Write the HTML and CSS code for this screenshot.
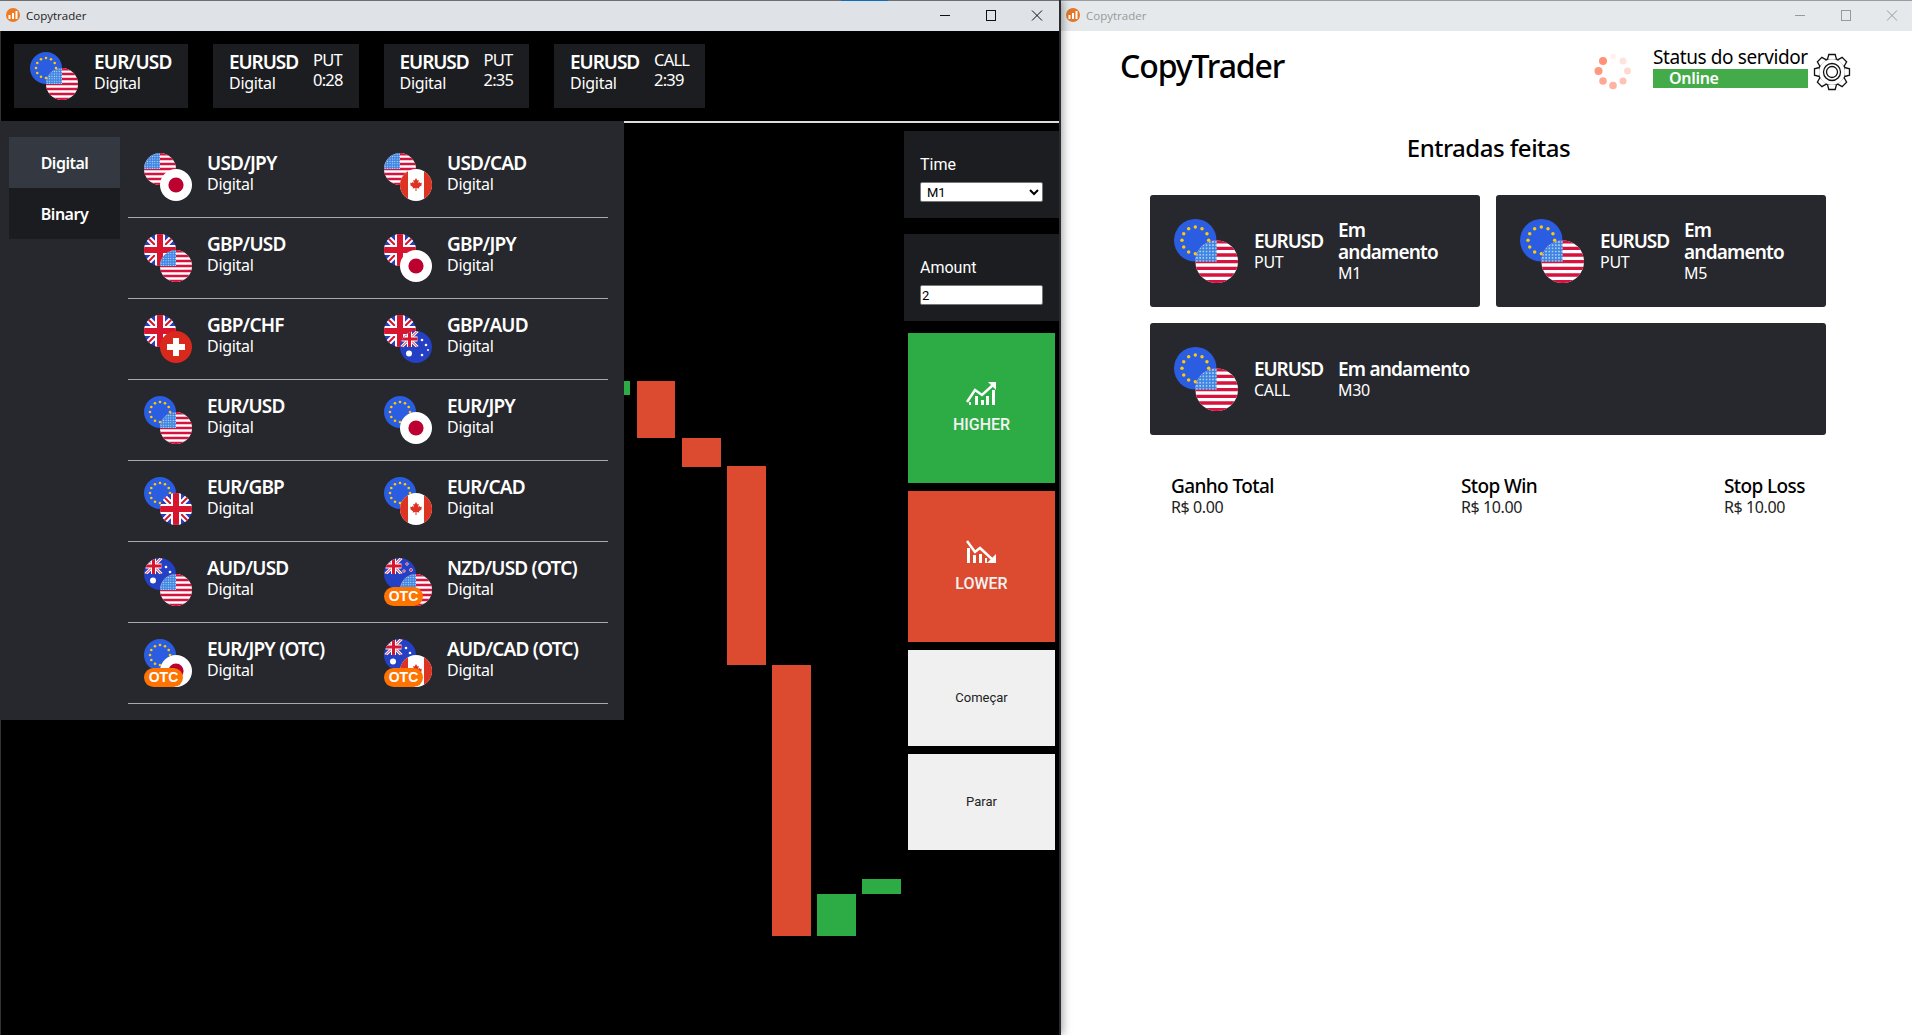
FILE: index.html
```html
<!DOCTYPE html>
<html>
<head>
    <title>Copytrader</title>
    <link rel="stylesheet" href="styles.css">
</head>
<body>
    <svg class="defs" width="0" height="0">
        <defs>
            <clipPath id="disc"><circle cx="16" cy="16" r="16"/></clipPath>
            <pattern id="stars" width="2.4" height="2.4" patternUnits="userSpaceOnUse">
                <rect width="2.4" height="2.4" fill="#3f86e2"/>
                <circle cx="1.2" cy="1.2" r=".6" fill="#cfe2fa"/>
            </pattern>
            <symbol id="jack" viewBox="0 0 32 32">
                <rect width="32" height="32" fill="#2b3fbd"/>
                <path d="M0 0L32 32M32 0L0 32" stroke="#fff" stroke-width="6"/>
                <path d="M0 0L32 32M32 0L0 32" stroke="#d8152f" stroke-width="2"/>
                <path d="M16 0V32M0 16H32" stroke="#fff" stroke-width="10"/>
                <path d="M16 0V32M0 16H32" stroke="#d8152f" stroke-width="6"/>
            </symbol>
            <symbol id="gb" viewBox="0 0 32 32">
                <g clip-path="url(#disc)"><use href="#jack" width="32" height="32"/></g>
            </symbol>
            <symbol id="us" viewBox="0 0 32 32">
                <g clip-path="url(#disc)">
                    <rect width="32" height="32" fill="#fff"/>
                    <path d="M0 1.2H32M0 6H32M0 11H32M0 16H32M0 21H32M0 26H32M0 31H32" stroke="#d8123f" stroke-width="2.5"/>
                    <rect width="16" height="16" fill="url(#stars)"/>
                </g>
            </symbol>
            <symbol id="eu" viewBox="0 0 32 32">
                <g clip-path="url(#disc)">
                    <rect width="32" height="32" fill="#2a5de2"/>
                    <g fill="#ffcb05">
                        <circle cx="26" cy="16" r="1.3"/><circle cx="24.7" cy="21" r="1.3"/><circle cx="21" cy="24.7" r="1.3"/>
                        <circle cx="16" cy="26" r="1.3"/><circle cx="11" cy="24.7" r="1.3"/><circle cx="7.3" cy="21" r="1.3"/>
                        <circle cx="6" cy="16" r="1.3"/><circle cx="7.3" cy="11" r="1.3"/><circle cx="11" cy="7.3" r="1.3"/>
                        <circle cx="16" cy="6" r="1.3"/><circle cx="21" cy="7.3" r="1.3"/><circle cx="24.7" cy="11" r="1.3"/>
                    </g>
                </g>
            </symbol>
            <symbol id="jp" viewBox="0 0 32 32">
                <g clip-path="url(#disc)">
                    <rect width="32" height="32" fill="#fff"/>
                    <circle cx="16" cy="16" r="7.6" fill="#bc0030"/>
                </g>
            </symbol>
            <symbol id="ca" viewBox="0 0 32 32">
                <g clip-path="url(#disc)">
                    <rect width="32" height="32" fill="#fff"/>
                    <path d="M0 0H8V32H0ZM24 0H32V32H24Z" fill="#dc3322"/>
                    <path d="M16 9l1.400 2.500 1.400-.7-.6 3.500 1.600-1.400.4 1.100 1.700-.3-.6 1.800.7.400-3 2.400.3 1.100-2.800-.3V22h-1v-2.900l-2.800.3.300-1.100-3-2.400.7-.4-.6-1.800 1.700.3.400-1.100 1.600 1.400-.6-3.500 1.400.7z" fill="#dc3322"/>
                </g>
            </symbol>
            <symbol id="ch" viewBox="0 0 32 32">
                <g clip-path="url(#disc)">
                    <rect width="32" height="32" fill="#d9291c"/>
                    <path d="M13 7H19V13H25V19H19V25H13V19H7V13H13Z" fill="#fff"/>
                </g>
            </symbol>
            <symbol id="au" viewBox="0 0 32 32">
                <g clip-path="url(#disc)">
                    <rect width="32" height="32" fill="#2440c4"/>
                    <use href="#jack" width="19" height="16"/>
                    <g fill="#fff">
                        <circle cx="9" cy="22.500" r="3"/>
                        <circle cx="22" cy="24" r="1.300"/><circle cx="26" cy="14" r="1.300"/>
                        <circle cx="22" cy="9" r="1.300"/><circle cx="28" cy="19" r="1"/>
                    </g>
                </g>
            </symbol>
            <symbol id="nz" viewBox="0 0 32 32">
                <g clip-path="url(#disc)">
                    <rect width="32" height="32" fill="#2440c4"/>
                    <use href="#jack" width="19" height="16"/>
                    <g fill="#d8152f" stroke="#fff" stroke-width=".6">
                        <circle cx="23" cy="6" r="1.300"/><circle cx="27" cy="12" r="1.500"/>
                        <circle cx="20" cy="13" r="1.300"/><circle cx="23" cy="22" r="1.500"/>
                    </g>
                </g>
            </symbol>
        </defs>
    </svg>

    <div class="focus-strip"></div>

    <div class="window window-left">
        <div class="titlebar">
            <svg class="app-logo" width="14" height="14" viewBox="0 0 14 14"><circle cx="7" cy="7" r="7" fill="#ee7a22"/><path d="M3.500 7V11M7 5V11M10.500 3V11" stroke="#fff" stroke-width="2"/></svg>
            <span class="app-name">Copytrader</span>
            <div class="win-buttons">
                <svg width="46" height="31" viewBox="0 0 46 31"><path d="M18 15.500H28" stroke="#111"/></svg>
                <svg width="46" height="31" viewBox="0 0 46 31"><rect x="18.500" y="10.500" width="9" height="10" fill="none" stroke="#111"/></svg>
                <svg width="46" height="31" viewBox="0 0 46 31"><path d="M18 10.500L28 20.500M28 10.500L18 20.500" stroke="#111"/></svg>
            </div>
        </div>
        <div class="window-body">
            <div class="top-cards">
                <div class="top-card">
                    <svg class="pair" width="48" height="48"><use href="#eu" width="32" height="32"/><use href="#us" x="16" y="16" width="32" height="32"/></svg>
                    <div class="pair-text main-col"><div class="pair-name">EUR/USD</div><div class="pair-sub">Digital</div></div>
                </div>
                <div class="top-card">
                    <div class="pair-text name-col"><div class="pair-name">EURUSD</div><div class="pair-sub">Digital</div></div>
                    <div class="thin"><div>PUT</div><div>0:28</div></div>
                </div>
                <div class="top-card">
                    <div class="pair-text name-col"><div class="pair-name">EURUSD</div><div class="pair-sub">Digital</div></div>
                    <div class="thin"><div>PUT</div><div>2:35</div></div>
                </div>
                <div class="top-card">
                    <div class="pair-text name-col"><div class="pair-name">EURUSD</div><div class="pair-sub">Digital</div></div>
                    <div class="thin"><div>CALL</div><div>2:39</div></div>
                </div>
            </div>

            <div class="chart-row">
                <svg class="chart" width="904" height="881" viewBox="0 0 904 881">
                    <g fill="#dc4a2f">
                        <rect x="637" y="258" width="38" height="57"/>
                        <rect x="682" y="315" width="39" height="29"/>
                        <rect x="727" y="343" width="39" height="199"/>
                        <rect x="772" y="542" width="39" height="271"/>
                    </g>
                    <g fill="#2dac45">
                        <rect x="600" y="258" width="30" height="14"/>
                        <rect x="817" y="771" width="39" height="42"/>
                        <rect x="862" y="756" width="39" height="15"/>
                    </g>
                </svg>
                <div class="side">
                    <div class="field">
                        <label for="time">Time</label>
                        <select id="time"><option>M1</option></select>
                    </div>
                    <div class="field">
                        <label for="amount">Amount</label>
                        <input type="text" id="amount" value="2">
                    </div>
                    <div class="trade trade-higher">
                        <svg width="31" height="24" viewBox="0 0 31 24">
                            <path d="M1 21L9 9L16 14L27 4" fill="none" stroke="#fff" stroke-width="2.500"/>
                            <path d="M22 1H30V9Z" fill="#fff"/>
                            <path d="M3 21h2v3h-2zM9 15h3v9h-3zM15 19h3v5h-3zM20 15h3v9h-3zM26 9h3v15h-3z" fill="#fff"/>
                        </svg>
                        <span>HIGHER</span>
                    </div>
                    <div class="trade trade-lower">
                        <svg width="31" height="24" viewBox="0 0 31 24">
                            <path d="M1 1L9 12L14 8L27 20" fill="none" stroke="#fff" stroke-width="2.500"/>
                            <path d="M21 23H30V14Z" fill="#fff"/>
                            <path d="M1 8h3v15h-3zM7 15h3v8h-3zM13 14h3v9h-3zM19 18h2v5h-2z" fill="#fff"/>
                        </svg>
                        <span>LOWER</span>
                    </div>
                    <div class="action">Começar</div>
                    <div class="action">Parar</div>
                </div>
            </div>

            <div class="pair-menu">
                <div class="tabs">
                    <div class="tab active">Digital</div>
                    <div class="tab">Binary</div>
                </div>
                <div class="pair-grid">
                    <div class="pair-item"><svg class="pair" width="48" height="48"><use href="#us" width="32" height="32"/><use href="#jp" x="16" y="16" width="32" height="32"/></svg><div class="pair-text"><div class="pair-name">USD/JPY</div><div class="pair-sub">Digital</div></div></div>
                    <div class="pair-item"><svg class="pair" width="48" height="48"><use href="#us" width="32" height="32"/><use href="#ca" x="16" y="16" width="32" height="32"/></svg><div class="pair-text"><div class="pair-name">USD/CAD</div><div class="pair-sub">Digital</div></div></div>
                    <div class="pair-item"><svg class="pair" width="48" height="48"><use href="#gb" width="32" height="32"/><use href="#us" x="16" y="16" width="32" height="32"/></svg><div class="pair-text"><div class="pair-name">GBP/USD</div><div class="pair-sub">Digital</div></div></div>
                    <div class="pair-item"><svg class="pair" width="48" height="48"><use href="#gb" width="32" height="32"/><use href="#jp" x="16" y="16" width="32" height="32"/></svg><div class="pair-text"><div class="pair-name">GBP/JPY</div><div class="pair-sub">Digital</div></div></div>
                    <div class="pair-item"><svg class="pair" width="48" height="48"><use href="#gb" width="32" height="32"/><use href="#ch" x="16" y="16" width="32" height="32"/></svg><div class="pair-text"><div class="pair-name">GBP/CHF</div><div class="pair-sub">Digital</div></div></div>
                    <div class="pair-item"><svg class="pair" width="48" height="48"><use href="#gb" width="32" height="32"/><use href="#au" x="16" y="16" width="32" height="32"/></svg><div class="pair-text"><div class="pair-name">GBP/AUD</div><div class="pair-sub">Digital</div></div></div>
                    <div class="pair-item"><svg class="pair" width="48" height="48"><use href="#eu" width="32" height="32"/><use href="#us" x="16" y="16" width="32" height="32"/></svg><div class="pair-text"><div class="pair-name">EUR/USD</div><div class="pair-sub">Digital</div></div></div>
                    <div class="pair-item"><svg class="pair" width="48" height="48"><use href="#eu" width="32" height="32"/><use href="#jp" x="16" y="16" width="32" height="32"/></svg><div class="pair-text"><div class="pair-name">EUR/JPY</div><div class="pair-sub">Digital</div></div></div>
                    <div class="pair-item"><svg class="pair" width="48" height="48"><use href="#eu" width="32" height="32"/><use href="#gb" x="16" y="16" width="32" height="32"/></svg><div class="pair-text"><div class="pair-name">EUR/GBP</div><div class="pair-sub">Digital</div></div></div>
                    <div class="pair-item"><svg class="pair" width="48" height="48"><use href="#eu" width="32" height="32"/><use href="#ca" x="16" y="16" width="32" height="32"/></svg><div class="pair-text"><div class="pair-name">EUR/CAD</div><div class="pair-sub">Digital</div></div></div>
                    <div class="pair-item"><svg class="pair" width="48" height="48"><use href="#au" width="32" height="32"/><use href="#us" x="16" y="16" width="32" height="32"/></svg><div class="pair-text"><div class="pair-name">AUD/USD</div><div class="pair-sub">Digital</div></div></div>
                    <div class="pair-item"><div class="otc-icon"><svg class="pair" width="48" height="48"><use href="#nz" width="32" height="32"/><use href="#us" x="16" y="16" width="32" height="32"/></svg><span class="otc">OTC</span></div><div class="pair-text"><div class="pair-name">NZD/USD (OTC)</div><div class="pair-sub">Digital</div></div></div>
                    <div class="pair-item"><div class="otc-icon"><svg class="pair" width="48" height="48"><use href="#eu" width="32" height="32"/><use href="#jp" x="16" y="16" width="32" height="32"/></svg><span class="otc">OTC</span></div><div class="pair-text"><div class="pair-name">EUR/JPY (OTC)</div><div class="pair-sub">Digital</div></div></div>
                    <div class="pair-item"><div class="otc-icon"><svg class="pair" width="48" height="48"><use href="#au" width="32" height="32"/><use href="#ca" x="16" y="16" width="32" height="32"/></svg><span class="otc">OTC</span></div><div class="pair-text"><div class="pair-name">AUD/CAD (OTC)</div><div class="pair-sub">Digital</div></div></div>
                </div>
            </div>
        </div>
    </div>

    <div class="window window-right">
        <div class="titlebar">
            <svg class="app-logo" width="14" height="14" viewBox="0 0 14 14"><circle cx="7" cy="7" r="7" fill="#e4772a"/><path d="M3.500 7V11M7 5V11M10.500 3V11" stroke="#fff" stroke-width="2"/></svg>
            <span class="app-name">Copytrader</span>
            <div class="win-buttons">
                <svg width="46" height="31" viewBox="0 0 46 31"><path d="M18 15.500H28" stroke="#999"/></svg>
                <svg width="46" height="31" viewBox="0 0 46 31"><rect x="18.500" y="10.500" width="9" height="10" fill="none" stroke="#999"/></svg>
                <svg width="46" height="31" viewBox="0 0 46 31"><path d="M18 10.500L28 20.500M28 10.500L18 20.500" stroke="#999"/></svg>
            </div>
        </div>
        <div class="trader">
            <div class="trader-head">
                <h1>CopyTrader</h1>
                <div class="server">
                    <svg class="spinner" width="40" height="40" viewBox="0 0 40 40">
                        <g fill="#ff9278">
                            <circle cx="20" cy="5.500" r="3" opacity=".12"/>
                            <circle cx="30" cy="10" r="3.500" opacity=".25"/>
                            <circle cx="34.500" cy="20" r="3.500" opacity=".35"/>
                            <circle cx="30" cy="30" r="3.500" opacity=".55"/>
                            <circle cx="20" cy="34.500" r="3.800" opacity=".7"/>
                            <circle cx="10" cy="30" r="3.800" opacity=".8"/>
                            <circle cx="5.500" cy="20" r="4" opacity=".95"/>
                            <circle cx="10" cy="10" r="4" opacity="1"/>
                        </g>
                    </svg>
                    <div class="status">
                        <div class="status-label">Status do servidor</div>
                        <div class="status-bar">Online</div>
                    </div>
                    <svg class="gear" width="38" height="38" viewBox="0 0 38 38" fill="#fff" stroke="#111" stroke-width="1.300">
                        <circle cx="19" cy="19" r="13.500"/>
                        <polyline points="14.500,6.400 15.800,1.500 22.200,1.500 23.500,6.400"/>
                        <polyline points="14.500,6.400 15.800,1.500 22.200,1.500 23.500,6.400" transform="rotate(45 19 19)"/>
                        <polyline points="14.500,6.400 15.800,1.500 22.200,1.500 23.500,6.400" transform="rotate(90 19 19)"/>
                        <polyline points="14.500,6.400 15.800,1.500 22.200,1.500 23.500,6.400" transform="rotate(135 19 19)"/>
                        <polyline points="14.500,6.400 15.800,1.500 22.200,1.500 23.500,6.400" transform="rotate(180 19 19)"/>
                        <polyline points="14.500,6.400 15.800,1.500 22.200,1.500 23.500,6.400" transform="rotate(225 19 19)"/>
                        <polyline points="14.500,6.400 15.800,1.500 22.200,1.500 23.500,6.400" transform="rotate(270 19 19)"/>
                        <polyline points="14.500,6.400 15.800,1.500 22.200,1.500 23.500,6.400" transform="rotate(315 19 19)"/>
                        <circle cx="19" cy="19" r="8.500"/>
                        <circle cx="19" cy="19" r="5.500"/>
                    </svg>
                </div>
            </div>

            <h2>Entradas feitas</h2>

            <div class="entries">
                <div class="entry">
                    <svg class="pair-big" width="64" height="64" viewBox="0 0 48 48"><use href="#eu" width="32" height="32"/><use href="#us" x="16" y="16" width="32" height="32"/></svg>
                    <div class="pair-text entry-pair"><div class="pair-name">EURUSD</div><div class="pair-sub">PUT</div></div>
                    <div class="pair-text entry-state"><div class="pair-name">Em andamento</div><div class="pair-sub">M1</div></div>
                </div>
                <div class="entry">
                    <svg class="pair-big" width="64" height="64" viewBox="0 0 48 48"><use href="#eu" width="32" height="32"/><use href="#us" x="16" y="16" width="32" height="32"/></svg>
                    <div class="pair-text entry-pair"><div class="pair-name">EURUSD</div><div class="pair-sub">PUT</div></div>
                    <div class="pair-text entry-state"><div class="pair-name">Em andamento</div><div class="pair-sub">M5</div></div>
                </div>
                <div class="entry entry-wide">
                    <svg class="pair-big" width="64" height="64" viewBox="0 0 48 48"><use href="#eu" width="32" height="32"/><use href="#us" x="16" y="16" width="32" height="32"/></svg>
                    <div class="pair-text entry-pair"><div class="pair-name">EURUSD</div><div class="pair-sub">CALL</div></div>
                    <div class="pair-text"><div class="pair-name">Em andamento</div><div class="pair-sub">M30</div></div>
                </div>
            </div>

            <div class="totals">
                <div class="total"><div class="total-name">Ganho Total</div><div class="total-value">R$ 0.00</div></div>
                <div class="total"><div class="total-name">Stop Win</div><div class="total-value">R$ 10.00</div></div>
                <div class="total"><div class="total-name">Stop Loss</div><div class="total-value">R$ 10.00</div></div>
            </div>
        </div>
    </div>
</body>
</html>
```

FILE: styles.css
```css
* {
    box-sizing: border-box;
}

body {
    margin: 0;
    width: 1912px;
    height: 1035px;
    overflow: hidden;
    display: flex;
    font-family: "Noto Sans", sans-serif;
    background-color: #fff;
}

h1,
h2 {
    margin: 0;
    font-weight: 500;
}

.defs {
    position: absolute;
}

.focus-strip {
    position: absolute;
    top: 0;
    left: 841px;
    width: 47px;
    height: 1px;
    background-color: #0f6cbd;
    z-index: 5;
}

.window {
    display: flex;
    flex-direction: column;
    height: 100%;
}

.window-left {
    width: 1061px;
    position: relative;
    z-index: 2;
    background-color: #000;
    border-right: 2px solid #2a2b30;
    box-shadow: 2px 0 8px rgba(0, 0, 0, 0.35), inset 1px 0 0 #333;
}

.window-right {
    flex: 1;
    background-color: #fff;
}

.titlebar {
    height: 31px;
    flex-shrink: 0;
    display: flex;
    align-items: center;
    padding-left: 6px;
    padding-bottom: 2px;
    border-top: 1px solid #6c7074;
    background-color: #dfe2e6;
}

.window-right .titlebar {
    padding-left: 5px;
    border-top-color: #9a9ea3;
    background-color: #e5e9ec;
}

.app-name {
    margin-left: 6px;
    font-family: "Open Sans", sans-serif;
    font-size: 11.500px;
    color: #222;
}

.window-right .app-name {
    color: #999;
}

.win-buttons {
    margin-left: auto;
    margin-right: -1px;
    display: flex;
}

.window-right .win-buttons {
    margin-right: -3px;
}

.window-body {
    flex: 1;
    position: relative;
    display: flex;
    flex-direction: column;
}

/* top strip */
.top-cards {
    height: 90px;
    flex-shrink: 0;
    display: flex;
    align-items: flex-start;
    gap: 25px;
    padding: 13px 0 0 14px;
}

.top-card {
    height: 64px;
    display: flex;
    align-items: center;
    gap: 16px;
    padding: 0 16px;
    background-color: #1c1d20;
}

.pair {
    flex-shrink: 0;
    display: block;
}

.pair-text {
    padding-bottom: 8px;
    color: #fff;
}

.pair-name {
    font-size: 19px;
    font-weight: 600;
    line-height: 22px;
    letter-spacing: -0.8px;
}

.pair-sub {
    font-size: 16px;
    line-height: 20px;
    letter-spacing: -0.3px;
}

.main-col {
    width: 78px;
}

.name-col {
    width: 68px;
    white-space: nowrap;
}

.name-col .pair-name,
.entry-pair .pair-name {
    letter-spacing: -1.1px;
}

.thin {
    padding-bottom: 12px;
    color: #fff;
    font-size: 16.500px;
    line-height: 20px;
    letter-spacing: -0.8px;
}

/* chart and controls */
.chart-row {
    flex: 1;
    display: flex;
    border-top: 2px solid #ddd;
}

.chart {
    flex-shrink: 0;
    display: block;
}

.side {
    flex: 1;
    padding-top: 8px;
    display: flex;
    flex-direction: column;
    align-items: flex-start;
}

.field {
    width: 100%;
    height: 87px;
    margin-bottom: 16px;
    padding: 23px 12px 0 16px;
    background-color: #1c1d20;
    color: #fff;
    font-family: Roboto, sans-serif;
    font-size: 16px;
}

.field label {
    display: block;
    line-height: 22px;
    margin-bottom: 6px;
}

.field select,
.field input {
    display: block;
    width: 123px;
    height: 20px;
    margin: 0;
    padding: 0 0 0 1px;
    border: 1px solid #777;
    border-radius: 2px;
    background-color: #fff;
    font-family: Roboto, sans-serif;
    font-size: 13px;
    color: #000;
}

.field select {
    padding-left: 2px;
}

.trade {
    width: 147px;
    height: 150px;
    margin: -4px 0 12px 4px;
    padding-bottom: 1px;
    display: flex;
    flex-direction: column;
    align-items: center;
    justify-content: center;
    gap: 10px;
    color: #f2f2f2;
    font-family: Roboto, sans-serif;
    font-size: 16px;
    font-weight: 500;
}

.trade-lower {
    height: 151px;
}

.trade-higher {
    background-color: #2dac45;
}

.trade-lower {
    background-color: #dc4a2f;
}

.action {
    width: 147px;
    height: 96px;
    margin: -4px 0 12px 4px;
    padding-bottom: 2px;
    display: flex;
    align-items: center;
    justify-content: center;
    background-color: #f0f0f0;
    color: #222;
    font-family: Roboto, sans-serif;
    font-size: 13px;
}

/* pair dropdown */
.pair-menu {
    position: absolute;
    top: 90px;
    left: 0;
    width: 624px;
    height: 599px;
    display: flex;
    padding: 16px 16px 0 9px;
    background-color: #27282d;
}

.tabs {
    width: 111px;
    margin-right: 8px;
}

.tab {
    height: 51px;
    display: flex;
    align-items: center;
    justify-content: center;
    background-color: #1b1c20;
    color: #fff;
    font-size: 16px;
    font-weight: 600;
    letter-spacing: -0.5px;
}

.tab.active {
    background-color: #343840;
}

.pair-grid {
    width: 480px;
    display: grid;
    grid-template-columns: 240px 240px;
    grid-auto-rows: 81px;
}

.pair-item {
    display: flex;
    align-items: center;
    gap: 15px;
    padding: 0 0 0 16px;
    border-bottom: 1px solid #a9a9ab;
}

.otc-icon {
    position: relative;
    width: 48px;
    height: 48px;
    flex-shrink: 0;
}

.otc {
    position: absolute;
    left: 0;
    bottom: 0;
    width: 39px;
    height: 19px;
    border-radius: 10px;
    background-color: #ff7300;
    color: #fff;
    text-align: center;
    font-family: "Liberation Sans", sans-serif;
    font-size: 14px;
    font-weight: 700;
    line-height: 19px;
}

/* right window */
.trader {
    flex: 1;
    padding: 0 61px 0 59px;
}

.trader-head {
    display: flex;
    justify-content: space-between;
    align-items: flex-start;
    height: 92px;
    padding-top: 15px;
}

h1 {
    margin-top: -1px;
    font-size: 32px;
    line-height: 42px;
    color: #000;
    letter-spacing: -1.1px;
}

.server {
    display: flex;
    align-items: flex-start;
}

.spinner {
    margin: 5px 20px 0 0;
}

.status {
    width: 155px;
    margin: 1px 5px 0 0;
}

.status-label {
    font-size: 19px;
    line-height: 20px;
    color: #000;
    white-space: nowrap;
    letter-spacing: -0.4px;
}

.status-bar {
    height: 19px;
    margin-top: 2px;
    padding-left: 16px;
    background-color: #44ab4a;
    color: #fff;
    font-size: 16px;
    font-weight: 600;
    line-height: 19px;
    letter-spacing: -0.3px;
}

.gear {
    margin-top: 7px;
}

h2 {
    padding: 9px 0 0 6px;
    text-align: center;
    font-size: 24px;
    line-height: 32px;
    color: #000;
    letter-spacing: -0.5px;
}

.entries {
    width: 676px;
    margin: 31px 0 0 30px;
    display: grid;
    grid-template-columns: 330px 330px;
    gap: 16px;
}

.entry {
    height: 112px;
    display: flex;
    align-items: center;
    padding-left: 24px;
    border-radius: 3px;
    background-color: #27282d;
}

.entry-wide {
    grid-column: 1 / 3;
}

.entry .pair-text {
    padding: 1px 0 0;
}

.entry .pair-sub {
    line-height: 21px;
}

.pair-big {
    flex-shrink: 0;
    margin-right: 16px;
}

.entry-pair {
    width: 84px;
    flex-shrink: 0;
}

.entry-state {
    width: 110px;
}

.totals {
    display: flex;
    margin: 40px 0 0 51px;
}

.total {
    color: #000;
}

.total:nth-child(1) {
    width: 290px;
}

.total:nth-child(2) {
    width: 263px;
}

.total-name {
    font-size: 19px;
    line-height: 22px;
    font-weight: 500;
    letter-spacing: -0.6px;
}

.total-value {
    font-size: 16px;
    line-height: 20px;
    letter-spacing: -0.4px;
    color: #222;
}
```
